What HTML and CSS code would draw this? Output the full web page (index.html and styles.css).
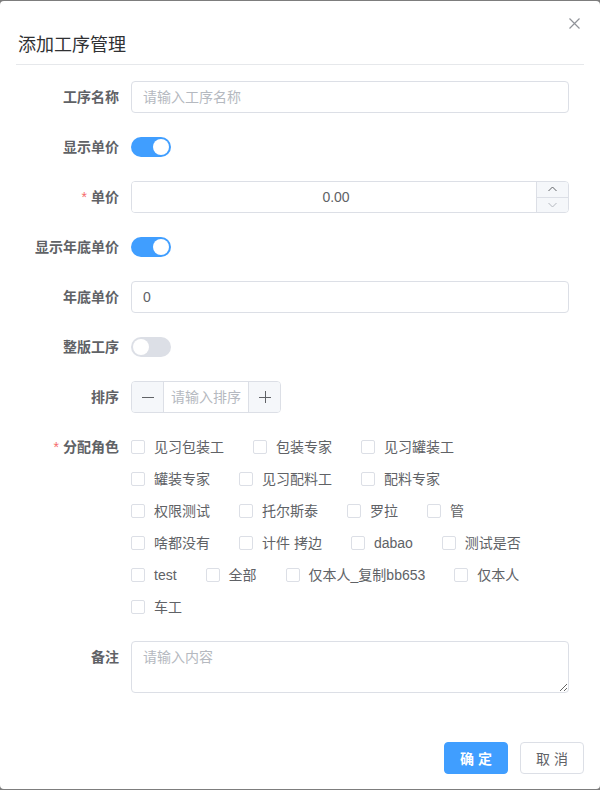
FILE: index.html
```html
<!DOCTYPE html>
<html lang="zh-CN">
<head>
<meta charset="utf-8">
<title>添加工序管理</title>
<link rel="stylesheet" href="styles.css">
</head>
<body>
<div class="dialog">
  <div class="dialog-header">
    <span class="dialog-title">添加工序管理</span>
    <button class="dialog-close" type="button" aria-label="关闭">
      <svg width="11" height="11" viewBox="0 0 11 11"><path d="M0.5 0.5 L10.5 10.5 M10.5 0.5 L0.5 10.5" stroke="#909399" stroke-width="1.2" fill="none"/></svg>
    </button>
  </div>

  <form class="dialog-body">
    <div class="form-item">
      <label class="form-label">工序名称</label>
      <div class="form-content">
        <input class="text-input" type="text" placeholder="请输入工序名称">
      </div>
    </div>

    <div class="form-item">
      <label class="form-label">显示单价</label>
      <div class="form-content">
        <span class="switch is-on"><span class="switch-knob"></span></span>
      </div>
    </div>

    <div class="form-item">
      <label class="form-label"><span class="required">*</span>单价</label>
      <div class="form-content">
        <div class="number-input">
          <input class="number-field" type="text" value="0.00">
          <div class="number-controls">
            <span class="number-up">
              <svg width="9" height="6" viewBox="0 0 9 6"><polyline points="0.5,5 4.5,1 8.5,5" fill="none" stroke="#606266" stroke-width="1"/></svg>
            </span>
            <span class="number-down">
              <svg width="9" height="6" viewBox="0 0 9 6"><polyline points="0.5,1 4.5,5 8.5,1" fill="none" stroke="#b4b8bf" stroke-width="1"/></svg>
            </span>
          </div>
        </div>
      </div>
    </div>

    <div class="form-item">
      <label class="form-label">显示年底单价</label>
      <div class="form-content">
        <span class="switch is-on"><span class="switch-knob"></span></span>
      </div>
    </div>

    <div class="form-item">
      <label class="form-label">年底单价</label>
      <div class="form-content">
        <input class="text-input" type="text" value="0">
      </div>
    </div>

    <div class="form-item">
      <label class="form-label">整版工序</label>
      <div class="form-content">
        <span class="switch"><span class="switch-knob"></span></span>
      </div>
    </div>

    <div class="form-item">
      <label class="form-label">排序</label>
      <div class="form-content">
        <div class="stepper">
          <span class="stepper-btn stepper-minus">
            <svg width="12" height="12" viewBox="0 0 12 12"><path d="M0 6.5 H12" stroke="#606266" stroke-width="1"/></svg>
          </span>
          <input class="stepper-field" type="text" placeholder="请输入排序">
          <span class="stepper-btn stepper-plus">
            <svg width="12" height="12" viewBox="0 0 12 12"><path d="M0 6.5 H12 M6.5 0 V12" stroke="#606266" stroke-width="1"/></svg>
          </span>
        </div>
      </div>
    </div>

    <div class="form-item">
      <label class="form-label"><span class="required">*</span>分配角色</label>
      <div class="form-content">
        <div class="checkbox-group">
          <label class="checkbox"><span class="checkbox-box"></span><span class="checkbox-text">见习包装工</span></label>
          <label class="checkbox"><span class="checkbox-box"></span><span class="checkbox-text">包装专家</span></label>
          <label class="checkbox"><span class="checkbox-box"></span><span class="checkbox-text">见习罐装工</span></label>
          <label class="checkbox"><span class="checkbox-box"></span><span class="checkbox-text">罐装专家</span></label>
          <label class="checkbox"><span class="checkbox-box"></span><span class="checkbox-text">见习配料工</span></label>
          <label class="checkbox"><span class="checkbox-box"></span><span class="checkbox-text">配料专家</span></label>
          <label class="checkbox"><span class="checkbox-box"></span><span class="checkbox-text">权限测试</span></label>
          <label class="checkbox"><span class="checkbox-box"></span><span class="checkbox-text">托尔斯泰</span></label>
          <label class="checkbox"><span class="checkbox-box"></span><span class="checkbox-text">罗拉</span></label>
          <label class="checkbox"><span class="checkbox-box"></span><span class="checkbox-text">管</span></label>
          <label class="checkbox"><span class="checkbox-box"></span><span class="checkbox-text">啥都没有</span></label>
          <label class="checkbox"><span class="checkbox-box"></span><span class="checkbox-text">计件 拷边</span></label>
          <label class="checkbox"><span class="checkbox-box"></span><span class="checkbox-text">dabao</span></label>
          <label class="checkbox"><span class="checkbox-box"></span><span class="checkbox-text">测试是否</span></label>
          <label class="checkbox"><span class="checkbox-box"></span><span class="checkbox-text">test</span></label>
          <label class="checkbox"><span class="checkbox-box"></span><span class="checkbox-text">全部</span></label>
          <label class="checkbox"><span class="checkbox-box"></span><span class="checkbox-text">仅本人_复制bb653</span></label>
          <label class="checkbox"><span class="checkbox-box"></span><span class="checkbox-text">仅本人</span></label>
          <label class="checkbox"><span class="checkbox-box"></span><span class="checkbox-text">车工</span></label>
        </div>
      </div>
    </div>

    <div class="form-item">
      <label class="form-label">备注</label>
      <div class="form-content">
        <textarea class="textarea" placeholder="请输入内容"></textarea>
      </div>
    </div>
  </form>

  <div class="dialog-footer">
    <button class="btn btn-primary" type="button">确 定</button>
    <button class="btn btn-default" type="button">取 消</button>
  </div>
</div>
</body>
</html>
```

FILE: styles.css
```css
* {
  box-sizing: border-box;
}

html, body {
  margin: 0;
  padding: 0;
}

body {
  background: #7d7d7d;
  font-family: "Liberation Sans", "Noto Sans CJK SC", sans-serif;
  font-size: 14px;
  color: #606266;
}

/* dialog shell */
.dialog {
  position: relative;
  margin-top: 1px;
  height: 788px;
  background: #fff;
  border-radius: 4px;
  display: flex;
  flex-direction: column;
}

.dialog-header {
  margin: 0 16px;
  height: 64px;
  padding: 32px 0 0 2px;
  border-bottom: 1px solid #e6e8eb;
}

.dialog-title {
  display: block;
  font-size: 18px;
  line-height: 24px;
  color: #303133;
}

.dialog-close {
  position: absolute;
  top: 16px;
  right: 19px;
  width: 13px;
  height: 13px;
  padding: 1px;
  border: 0;
  background: transparent;
  display: flex;
  align-items: center;
  justify-content: center;
  cursor: pointer;
}

/* form */
.dialog-body {
  margin: 0;
  padding: 16px 31px 0 0;
}

.form-item {
  display: flex;
  margin-bottom: 18px;
}

.form-label {
  flex: 0 0 131px;
  padding-right: 12px;
  text-align: right;
  line-height: 32px;
  height: 32px;
  font-weight: 700;
  color: #606266;
  white-space: nowrap;
}

.required {
  color: #f56c6c;
  font-weight: 400;
  margin-right: 4px;
}

.form-content {
  flex: 1;
  min-width: 0;
}

.text-input {
  display: block;
  width: 100%;
  height: 32px;
  padding: 0 11px;
  border: 1px solid #dcdfe6;
  border-radius: 4px;
  font: inherit;
  font-size: 14px;
  color: #606266;
  outline: none;
  background: #fff;
}

.text-input::placeholder,
.stepper-field::placeholder,
.textarea::placeholder {
  color: #b5b9c0;
}

/* switch */
.switch {
  display: block;
  position: relative;
  margin-top: 6px;
  width: 40px;
  height: 20px;
  border-radius: 10px;
  background: #dcdfe6;
}

.switch.is-on {
  background: #409eff;
}

.switch-knob {
  position: absolute;
  top: 2px;
  left: 2px;
  width: 16px;
  height: 16px;
  border-radius: 50%;
  background: #fff;
}

.switch.is-on .switch-knob {
  left: 22px;
}

/* number input with right controls */
.number-input {
  display: flex;
  height: 32px;
  border: 1px solid #dcdfe6;
  border-radius: 4px;
  overflow: hidden;
}

.number-field {
  flex: 1;
  min-width: 0;
  border: 0;
  outline: none;
  text-align: center;
  font: inherit;
  font-size: 14px;
  color: #606266;
  padding: 0 0 0 4px;
  background: #fff;
}

.number-controls {
  flex: 0 0 32px;
  display: flex;
  flex-direction: column;
  border-left: 1px solid #dcdfe6;
  background: #f5f7fa;
}

.number-up,
.number-down {
  flex: 1;
  display: flex;
  align-items: center;
  justify-content: center;
}

.number-up {
  border-bottom: 1px solid #dcdfe6;
}

/* stepper */
.stepper {
  display: flex;
  width: 150px;
  height: 32px;
  border: 1px solid #dcdfe6;
  border-radius: 4px;
  overflow: hidden;
}

.stepper-btn {
  flex: 0 0 32px;
  display: flex;
  align-items: center;
  justify-content: center;
  background: #f5f7fa;
}

.stepper-minus {
  border-right: 1px solid #dcdfe6;
}

.stepper-plus {
  border-left: 1px solid #dcdfe6;
}

.stepper-field {
  flex: 1;
  min-width: 0;
  border: 0;
  outline: none;
  text-align: center;
  font: inherit;
  font-size: 14px;
  color: #606266;
  padding: 0 4px;
}

/* checkboxes */
.checkbox-group {
  display: flex;
  flex-wrap: wrap;
  column-gap: 29px;
  padding-right: 29px;
}

.checkbox {
  display: inline-flex;
  align-items: center;
  height: 32px;
  white-space: nowrap;
  color: #606266;
}

.checkbox-box {
  width: 14px;
  height: 14px;
  border: 1px solid #dcdfe6;
  border-radius: 2px;
  background: #fff;
}

.checkbox-text {
  padding-left: 9px;
  line-height: 20px;
}

/* textarea */
.textarea {
  display: block;
  width: 100%;
  height: 52px;
  padding: 5px 11px;
  border: 1px solid #dcdfe6;
  border-radius: 4px;
  font: inherit;
  font-size: 14px;
  line-height: 21px;
  color: #606266;
  outline: none;
  resize: vertical;
}

/* footer */
.dialog-footer {
  margin-top: auto;
  display: flex;
  justify-content: flex-end;
  gap: 12px;
  padding: 0 16px 15px;
}

.btn {
  width: 64px;
  height: 32px;
  border-radius: 4px;
  font-family: "Liberation Sans", "Noto Sans CJK SC", sans-serif;
  font-size: 14px;
  font-weight: 700;
  padding: 0;
  cursor: pointer;
}

.btn-primary {
  background: #409eff;
  border: 1px solid #409eff;
  color: #fff;
}

.btn-default {
  background: #fff;
  border: 1px solid #dcdfe6;
  color: #606266;
  font-weight: 400;
}
```
